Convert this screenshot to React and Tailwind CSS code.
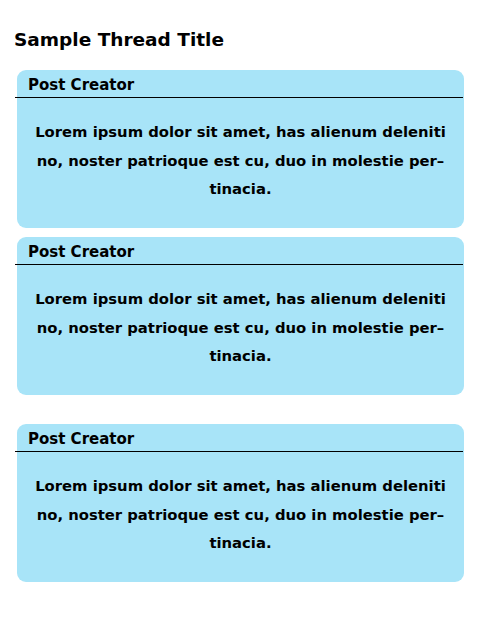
export default function App() {
  const posts = [0, 1, 2];
  const font = { fontFamily: '"DejaVu Sans", Verdana, sans-serif' };
  return (
    <div className="w-[480px] h-[640px] bg-white" style={font}>
      <h1 className="pt-[28px] pl-[14px] text-[18.5px] font-bold leading-[24px] text-black">Sample Thread Title</h1>
      <div className="mt-[18px] flex flex-col">
        {posts.map((p, i) => (
          <div
            key={i}
            className={`ml-[17px] w-[447px] h-[158px] rounded-[9px] bg-[#a8e4f8] ${i === 1 ? "mt-[9px]" : ""} ${i === 2 ? "mt-[29px]" : ""}`}
          >
            <div className="px-[11px] pt-[6px] h-[27px] text-[15px] font-bold leading-[18px] text-black">Post Creator</div>
            <div className="-ml-[2px] w-[448px] h-px bg-black" />
            <p className="pt-[20px] text-center text-[14.8px] font-bold leading-[28.5px] text-black whitespace-nowrap">
              Lorem ipsum dolor sit amet, has alienum deleniti
              <br />
              no, noster patrioque est cu, duo in molestie per–
              <br />
              tinacia.
            </p>
          </div>
        ))}
      </div>
    </div>
  );
}
